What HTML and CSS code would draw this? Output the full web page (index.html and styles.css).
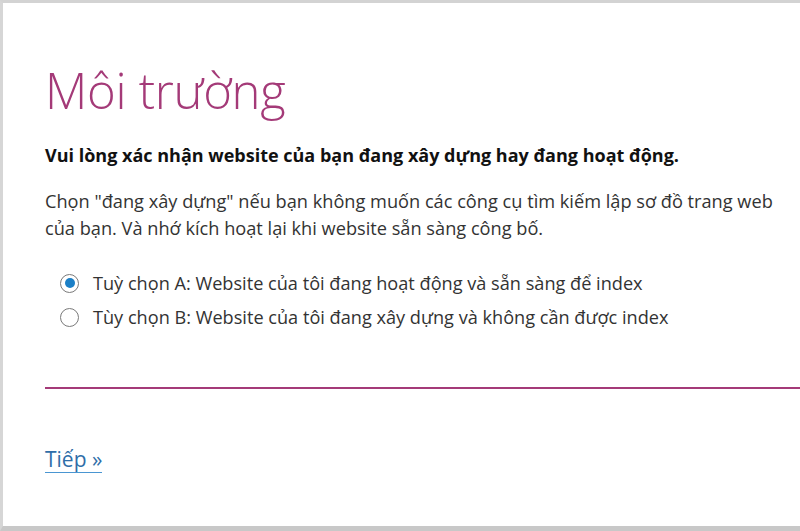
FILE: index.html
```html
<!DOCTYPE html>
<html lang="vi">
<head>
<meta charset="utf-8">
<link rel="stylesheet" href="styles.css">
</head>
<body>
<div class="frame">
  <div class="content">
    <h1 class="title">Môi trường</h1>
    <p class="lead">Vui lòng xác nhận website của bạn đang xây dựng hay đang hoạt động.</p>
    <p class="desc">Chọn "đang xây dựng" nếu bạn không muốn các công cụ tìm kiếm lập sơ đồ trang web của bạn. Và nhớ kích hoạt lại khi website sẵn sàng công bố.</p>
    <div class="options">
      <label class="option"><span class="radio checked"></span><span>Tuỳ chọn A: Website của tôi đang hoạt động và sẵn sàng để index</span></label>
      <label class="option"><span class="radio"></span><span>Tùy chọn B: Website của tôi đang xây dựng và không cần được index</span></label>
    </div>
    <hr class="rule">
    <a class="next" href="#">Tiếp »</a>
  </div>
</div>
</body>
</html>
```

FILE: styles.css
```css
html, body {
  margin: 0;
  padding: 0;
  background: #ffffff;
}
.frame {
  box-sizing: border-box;
  width: 800px;
  height: 531px;
  border-top: 3px solid #d3d3d3;
  border-left: 3px solid #d6d6d6;
  border-bottom: 5px solid #c8c8c8;
  background: #fff;
  overflow: hidden;
}
.content {
  padding: 57px 0 0 42px;
  font-family: "Open Sans", "Noto Sans", sans-serif;
  color: #222;
}
.title {
  margin: 0;
  font-weight: 300;
  font-size: 49px;
  line-height: 60px;
  color: #a43a78;
  letter-spacing: -0.3px;
}
.lead {
  margin: 24px 0 0 0;
  font-weight: 700;
  font-size: 18px;
  line-height: 22px;
  color: #111;
  letter-spacing: 0;
}
.desc {
  margin: 22px 0 0 0;
  width: 740px;
  font-size: 18.2px;
  line-height: 27px;
  color: #333;
  letter-spacing: 0;
}
.options {
  margin: 28px 0 0 15px;
  display: flex;
  flex-direction: column;
  gap: 8px;
}
.option {
  display: flex;
  align-items: center;
  gap: 14px;
  font-size: 18.15px;
  line-height: 26px;
  color: #333;
}
.radio {
  box-sizing: border-box;
  width: 19px;
  height: 19px;
  border: 1.5px solid #7a7a7a;
  border-radius: 50%;
  display: flex;
  align-items: center;
  justify-content: center;
  flex: none;
}
.radio.checked::after {
  content: "";
  width: 10px;
  height: 10px;
  border-radius: 50%;
  background: #1b7fc6;
}
.rule {
  margin: 57px 0 0 0;
  border: 0;
  height: 2px;
  background: #a43a78;
}
.next {
  display: inline-block;
  margin-top: 57px;
  font-size: 21px;
  line-height: 26px;
  color: #2f6ea8;
  text-decoration: none;
  border-bottom: 1.5px solid #4a96d2;
}
```
